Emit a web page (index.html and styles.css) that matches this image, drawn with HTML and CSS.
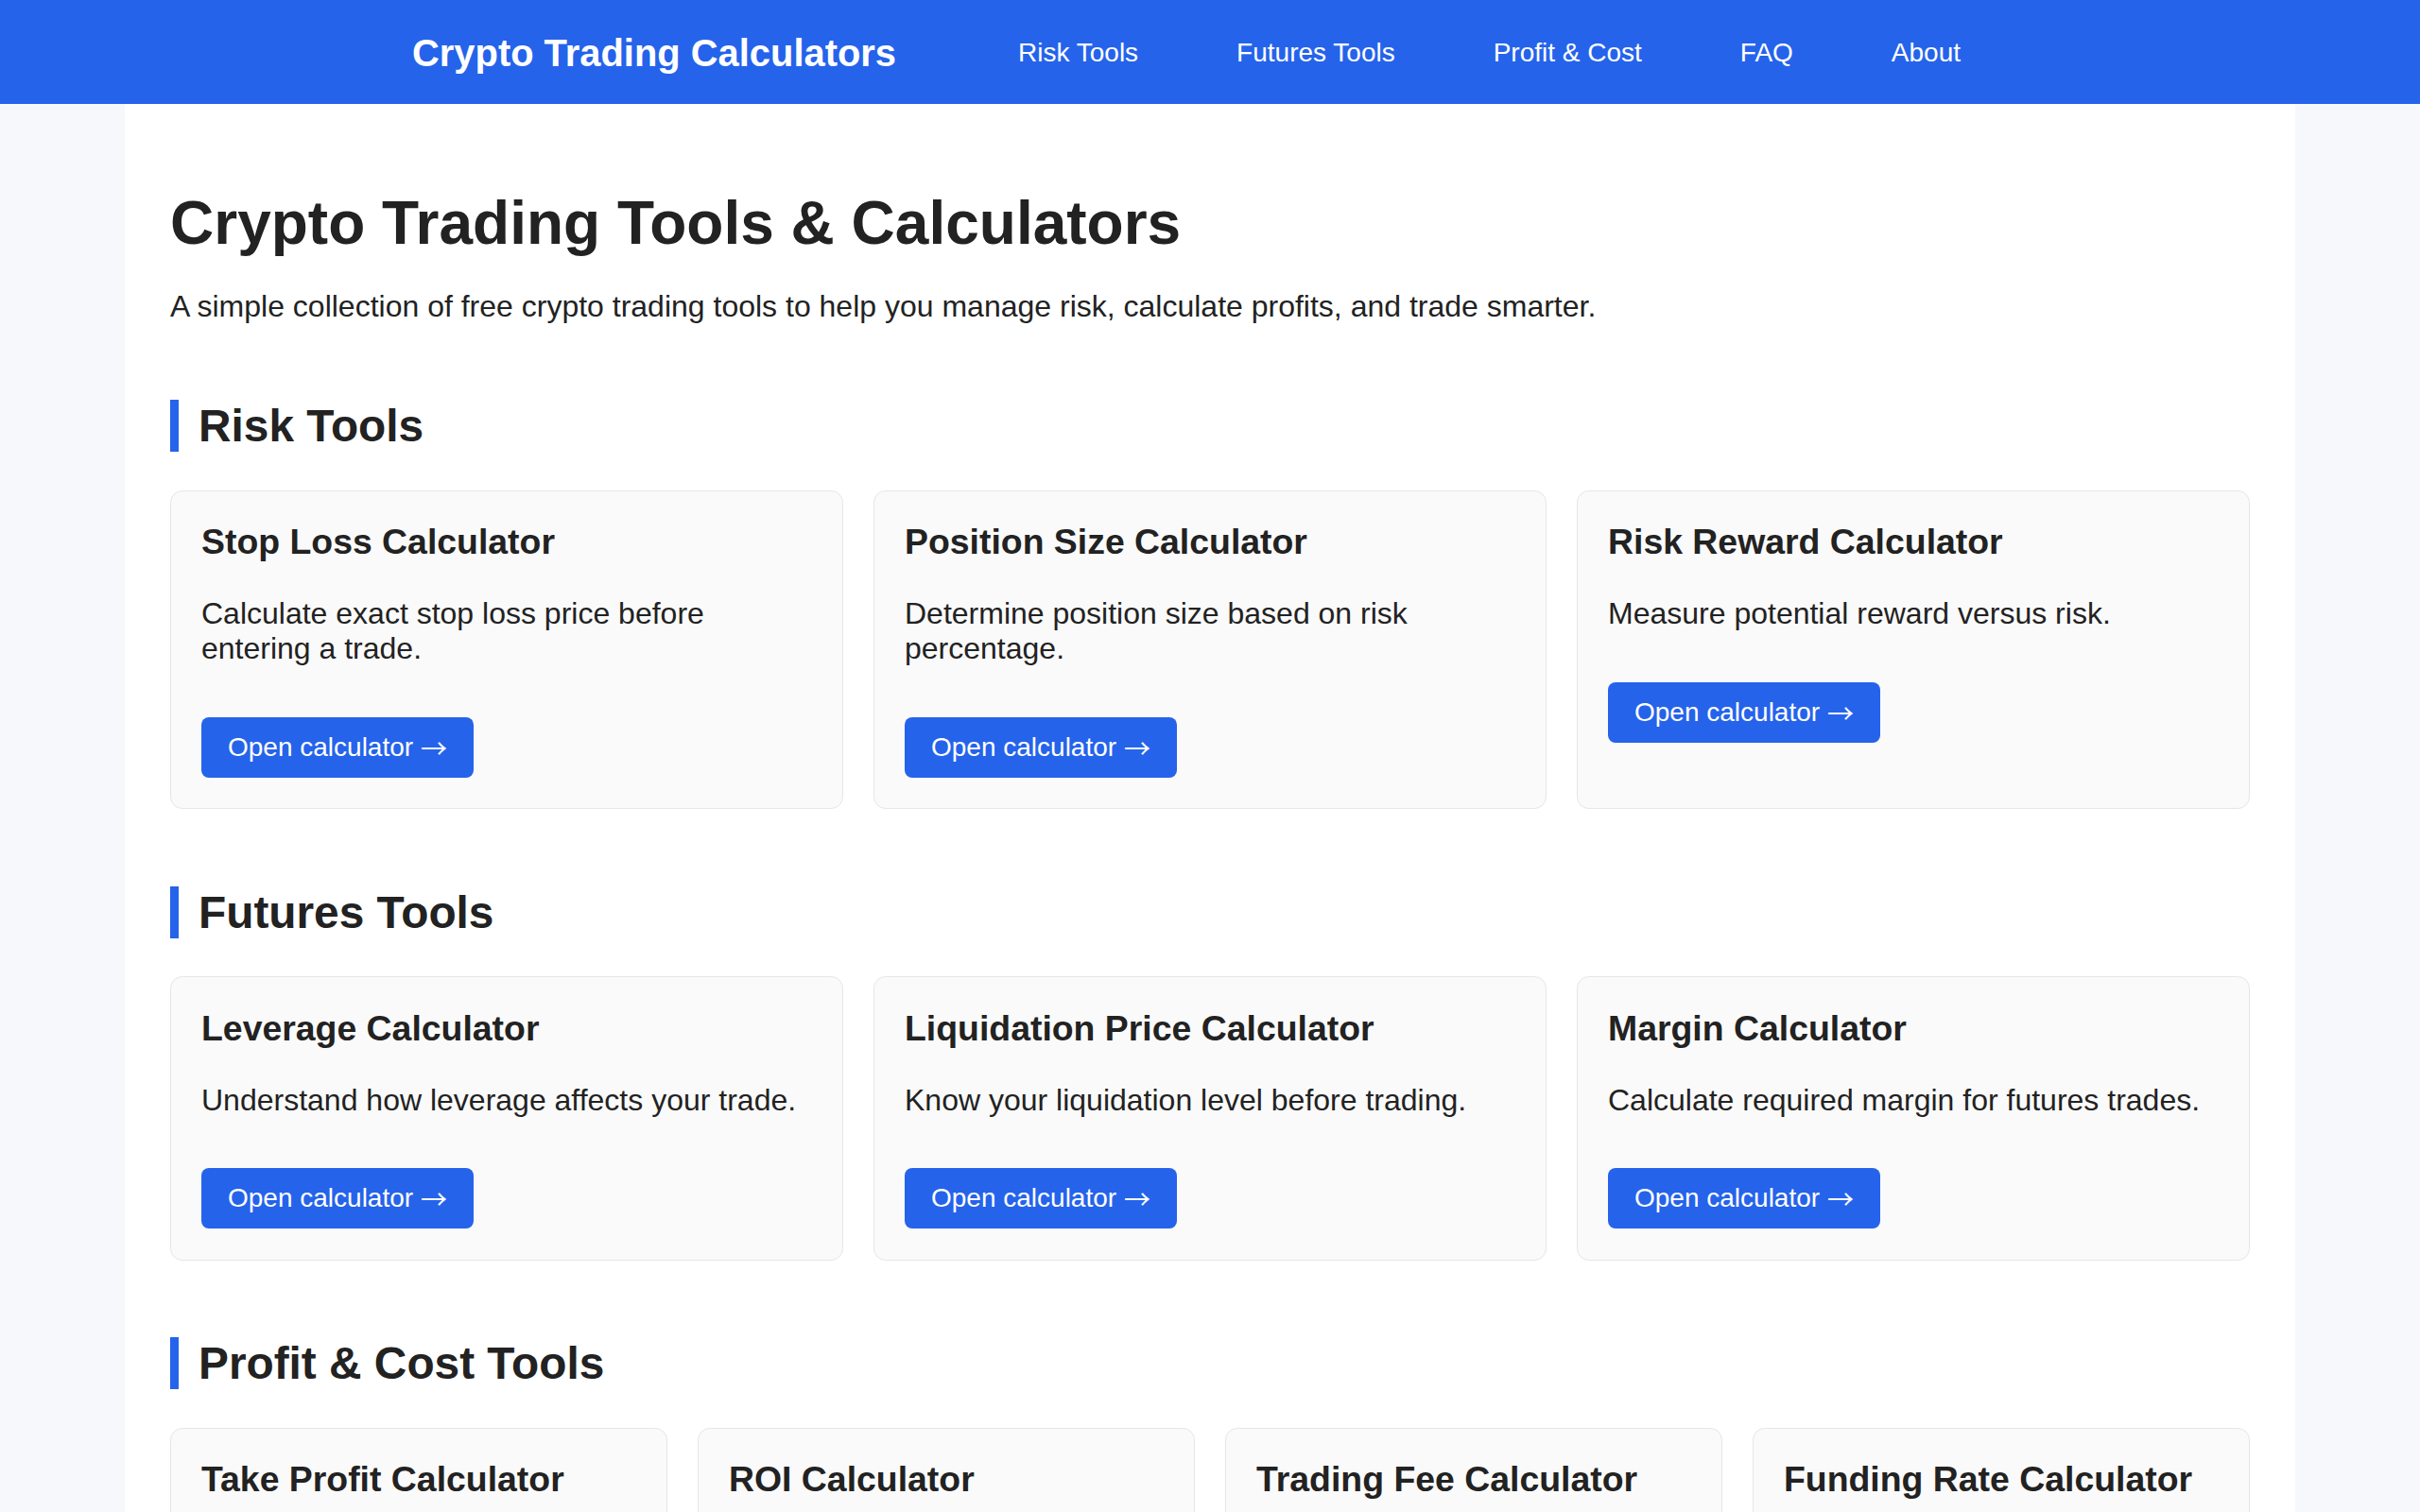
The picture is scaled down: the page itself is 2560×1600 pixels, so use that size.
FILE: index.html
```html
<!DOCTYPE html>
<html lang="en">
<head>
<meta charset="utf-8">
<title>Crypto Trading Calculators</title>
<link rel="stylesheet" href="styles.css">
</head>
<body>
<header class="site-header">
  <div class="header-inner">
    <a class="brand" href="#">Crypto Trading Calculators</a>
    <nav class="nav">
      <a href="#risk">Risk Tools</a>
      <a href="#futures">Futures Tools</a>
      <a href="#profit">Profit &amp; Cost</a>
      <a href="#faq">FAQ</a>
      <a href="#about">About</a>
    </nav>
  </div>
</header>
<main class="main">
  <h1 class="title">Crypto Trading Tools &amp; Calculators</h1>
  <p class="intro">A simple collection of free crypto trading tools to help you manage risk, calculate profits, and trade smarter.</p>

  <section class="section" id="risk">
    <h2 class="section-title">Risk Tools</h2>
    <div class="grid grid-3">
      <div class="card">
        <h3 class="card-title">Stop Loss Calculator</h3>
        <p class="card-text">Calculate exact stop loss price before entering a trade.</p>
        <a class="btn" href="#">Open calculator <span class="arrow">→</span></a>
      </div>
      <div class="card">
        <h3 class="card-title">Position Size Calculator</h3>
        <p class="card-text">Determine position size based on risk percentage.</p>
        <a class="btn" href="#">Open calculator <span class="arrow">→</span></a>
      </div>
      <div class="card">
        <h3 class="card-title">Risk Reward Calculator</h3>
        <p class="card-text">Measure potential reward versus risk.</p>
        <a class="btn" href="#">Open calculator <span class="arrow">→</span></a>
      </div>
    </div>
  </section>

  <section class="section" id="futures">
    <h2 class="section-title">Futures Tools</h2>
    <div class="grid grid-3">
      <div class="card">
        <h3 class="card-title">Leverage Calculator</h3>
        <p class="card-text">Understand how leverage affects your trade.</p>
        <a class="btn" href="#">Open calculator <span class="arrow">→</span></a>
      </div>
      <div class="card">
        <h3 class="card-title">Liquidation Price Calculator</h3>
        <p class="card-text">Know your liquidation level before trading.</p>
        <a class="btn" href="#">Open calculator <span class="arrow">→</span></a>
      </div>
      <div class="card">
        <h3 class="card-title">Margin Calculator</h3>
        <p class="card-text">Calculate required margin for futures trades.</p>
        <a class="btn" href="#">Open calculator <span class="arrow">→</span></a>
      </div>
    </div>
  </section>

  <section class="section" id="profit">
    <h2 class="section-title">Profit &amp; Cost Tools</h2>
    <div class="grid grid-4">
      <div class="card">
        <h3 class="card-title">Take Profit Calculator</h3>
        <p class="card-text">Plan profit targets for your trades.</p>
        <a class="btn" href="#">Open calculator <span class="arrow">→</span></a>
      </div>
      <div class="card">
        <h3 class="card-title">ROI Calculator</h3>
        <p class="card-text">Calculate return on investment.</p>
        <a class="btn" href="#">Open calculator <span class="arrow">→</span></a>
      </div>
      <div class="card">
        <h3 class="card-title">Trading Fee Calculator</h3>
        <p class="card-text">Estimate exchange trading fees.</p>
        <a class="btn" href="#">Open calculator <span class="arrow">→</span></a>
      </div>
      <div class="card">
        <h3 class="card-title">Funding Rate Calculator</h3>
        <p class="card-text">Estimate funding costs on perpetuals.</p>
        <a class="btn" href="#">Open calculator <span class="arrow">→</span></a>
      </div>
    </div>
  </section>
</main>
</body>
</html>
```

FILE: styles.css
```css
* {
  box-sizing: border-box;
}

html, body {
  margin: 0;
  padding: 0;
}

body {
  background: #f6f8fc;
  color: #222222;
  font-family: "Liberation Sans", Arial, sans-serif;
  font-size: 32px;
}

a {
  text-decoration: none;
}

.site-header {
  background: #2563eb;
  height: 110px;
}

.header-inner {
  height: 110px;
  padding-left: 436px;
  padding-top: 2px;
  display: flex;
  align-items: center;
}

.brand {
  color: #ffffff;
  font-weight: 700;
  font-size: 39.9px;
}

.nav {
  display: flex;
  gap: 104px;
  margin-left: 129px;
}

.nav a {
  color: #ffffff;
  font-size: 28px;
}

.main {
  width: 2296px;
  margin: 0 auto;
  background: #ffffff;
  padding: 89px 48px 80px;
}

.title {
  margin: 0 0 33px;
  font-size: 64px;
  font-weight: 700;
  line-height: normal;
}

.intro {
  margin: 0;
  font-size: 32px;
  line-height: normal;
}

.section {
  margin-top: 80px;
}

.section + .section {
  margin-top: 81.6px;
}

.section-title {
  margin: 0 0 40.5px;
  font-size: 47.8px;
  font-weight: 700;
  line-height: normal;
  border-left: 9.6px solid #2563eb;
  padding-left: 21px;
}

.grid {
  display: grid;
  gap: 32px;
}

.grid-3 {
  grid-template-columns: repeat(3, 1fr);
}

.grid-4 {
  grid-template-columns: repeat(4, 1fr);
}

.card {
  background: #fafafa;
  border: 1.6px solid #e6e6ea;
  border-radius: 12.8px;
  padding: 32.5px 32px 32.5px;
}

.card-title {
  margin: 0;
  font-size: 37.4px;
  font-weight: 700;
  line-height: normal;
}

.card-text {
  margin: 36px 0 53.5px;
  font-size: 32px;
  line-height: normal;
}

.btn {
  display: inline-flex;
  align-items: center;
  height: 64px;
  padding: 0 28px;
  background: #2563eb;
  color: #ffffff;
  font-size: 28px;
  border-radius: 8px;
  white-space: pre;
}

.arrow {
  font-family: "Noto Sans CJK SC", "Liberation Sans", sans-serif;
  font-size: 28px;
  line-height: 1;
}
```
